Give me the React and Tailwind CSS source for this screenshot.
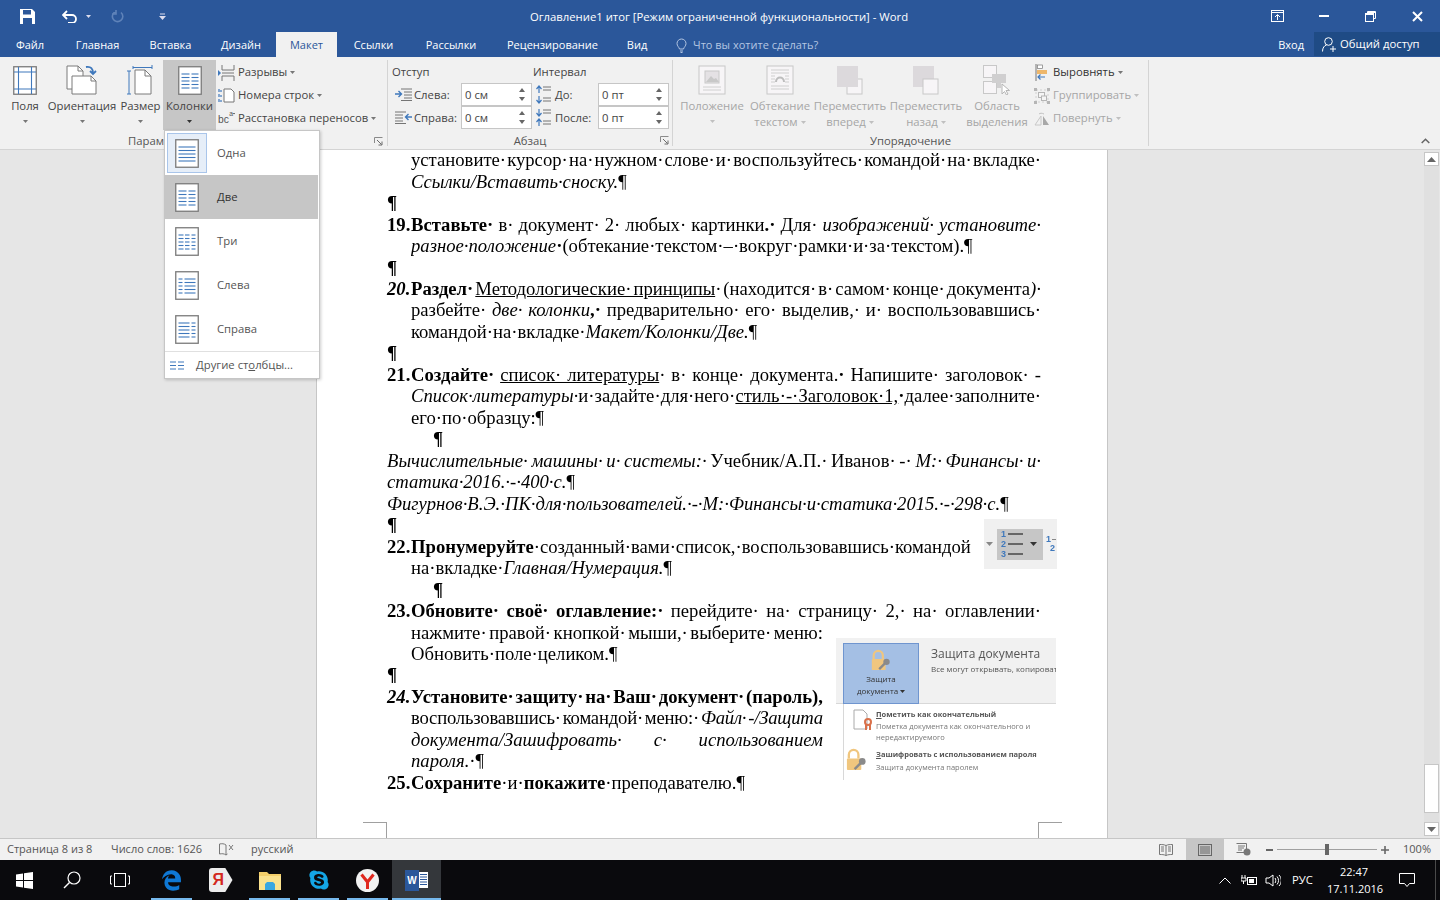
import { FaEdgeLegacy, FaSkype } from 'react-icons/fa6';

const BLUE = '#3f78bc';

function Caret({ className = '', color = '#6a6a6a' }) {
  return (
    <svg width="5" height="3" viewBox="0 0 5 3" className={className}>
      <path d="M0 0h5L2.5 3z" fill={color} />
    </svg>
  );
}

function ColIcon({ cols = [[3, 20]], lines = [8, 11.5, 15, 18.5, 22] }) {
  return (
    <svg width="24" height="29" viewBox="0 0 24 29" className="shrink-0">
      <rect x="0.75" y="0.75" width="22.5" height="27.5" fill="#fff" stroke="#7b7b7b" strokeWidth="1.3" />
      {cols.map(([a, b]) =>
        lines.map((y) => <line key={`${a}-${y}`} x1={a + 0.5} x2={b + 0.5} y1={y} y2={y} stroke={BLUE} strokeWidth="1.1" />)
      )}
    </svg>
  );
}

const TWO = [[3, 11], [13, 20]];
const THREE = [[3, 8], [9.5, 14], [16, 20]];
const LEFT = [[3, 7], [9, 20]];
const RIGHT = [[3, 14], [16, 20]];

function MarginsIcon() {
  return (
    <svg width="24" height="29" viewBox="0 0 24 29">
      <rect x="0.75" y="0.75" width="22.5" height="27.5" fill="#fff" stroke="#7b7b7b" strokeWidth="1.3" />
      <path d="M5.5 1v27M18.5 1v27M1 6h22M1 23h22" stroke={BLUE} strokeWidth="1.1" fill="none" />
    </svg>
  );
}

function OrientationIcon() {
  return (
    <svg width="32" height="30" viewBox="0 0 32 30">
      <path d="M1 1h11l5 5v18H1z" fill="#fff" stroke="#7b7b7b" />
      <path d="M12 1v5h5" fill="none" stroke="#7b7b7b" />
      <path d="M6 11h19l5 5v13H6z" fill="#fff" stroke="#7b7b7b" />
      <path d="M25 11v5h5" fill="none" stroke="#7b7b7b" />
      <path d="M20 2c5-1 7 2 7 6M24 6l3 3 3-3" fill="none" stroke={BLUE} strokeWidth="1.8" />
    </svg>
  );
}

function SizeIcon() {
  return (
    <svg width="27" height="30" viewBox="0 0 27 30">
      <path d="M6 1v3M25 0v4M6 2.5h19" stroke={BLUE} strokeWidth="1" fill="none" />
      <path d="M8 5h10l6 6v18H8z" fill="#fff" stroke="#7b7b7b" />
      <path d="M18 5v6h6" fill="none" stroke="#7b7b7b" />
      <path d="M0 6h4M0 29h4M2 6v23" stroke={BLUE} strokeWidth="1" fill="none" />
    </svg>
  );
}

function BigButton({ w, label, second, caret = true, active, disabled, icon }) {
  return (
    <div
      className={`flex flex-col items-center shrink-0 h-[70px] pt-[5px] ${w} ${active ? 'bg-[#c6c6c6]' : ''}`}
    >
      <div className="h-[30px] flex items-center justify-center">{icon}</div>
      <div className={`mt-[3px] text-[11.3px] leading-[16px] whitespace-nowrap ${disabled ? 'text-[#a6a6a6]' : 'text-[#444444]'}`}>
        {label}
      </div>
      {second ? (
        <div className={`flex items-center gap-[3px] text-[11.3px] leading-[16px] whitespace-nowrap ${disabled ? 'text-[#a6a6a6]' : 'text-[#444444]'}`}>
          {second}
          {caret && <Caret color="#c0c0c0" />}
        </div>
      ) : (
        caret && <Caret className="mt-[6px]" color={active ? '#333' : disabled ? '#c0c0c0' : '#777'} />
      )}
    </div>
  );
}

function SmallRow({ icon, label, disabled, dark }) {
  return (
    <div className="flex items-center h-[23px] whitespace-nowrap">
      <div className="w-[17px] flex justify-center shrink-0">{icon}</div>
      <span className={`ml-[3px] text-[11.3px] ${disabled ? 'text-[#a6a6a6]' : dark ? 'text-[#333]' : 'text-[#444444]'}`}>{label}</span>
      <Caret className="ml-[3px]" color={disabled ? '#c0c0c0' : '#777'} />
    </div>
  );
}

function Launcher() {
  return (
    <svg width="9" height="9" viewBox="0 0 9 9">
      <path d="M0.5 6V0.5H8.5" fill="none" stroke="#8a8a8a" />
      <path d="M3 3l4.5 4.5M8 4.5V8H4.5" fill="none" stroke="#6a6a6a" />
    </svg>
  );
}

function Spin({ value }) {
  return (
    <div className="flex items-center justify-between w-[71px] h-[23px] bg-white border border-[#c6c6c6] pl-[3px] pr-[6px] text-[11.3px] text-[#444444] shrink-0">
      <span className="pt-[1px]">{value}</span>
      <div className="flex flex-col gap-[5px]">
        <svg width="6" height="4" viewBox="0 0 6 4"><path d="M0 4h6L3 0z" fill="#666" /></svg>
        <svg width="6" height="4" viewBox="0 0 6 4"><path d="M0 0h6L3 4z" fill="#666" /></svg>
      </div>
    </div>
  );
}

function IndentIcon({ flip }) {
  return (
    <svg width="17" height="13" viewBox="0 0 17 13">
      <path d={flip ? 'M0 1h11M0 4h8M0 7h8M0 10h8M0 12.5h11' : 'M6 1h11M9 4h8M9 7h8M9 10h8M6 12.5h11'} stroke="#666" strokeWidth="0.9" fill="none" />
      <path d={flip ? 'M17 6H11M13.5 3l-3 3 3 3' : 'M0 6h6M3.5 3l3 3-3 3'} stroke={BLUE} strokeWidth="1.4" fill="none" />
    </svg>
  );
}

function SpaceIcon({ after }) {
  return (
    <svg width="16" height="19" viewBox="0 0 16 19">
      <path d="M8 2h8M8 5h8M8 13h8M8 16h8" stroke="#666" strokeWidth="0.9" fill="none" />
      {after ? (
        <path d="M4 1v6M1.5 5L4 8l2.5-3M4 18v-6M1.5 14L4 11l2.5 3" stroke={BLUE} strokeWidth="1.2" fill="none" />
      ) : (
        <path d="M4 8V2M1.5 4L4 1l2.5 3M4 11v6M1.5 15L4 18l2.5-3" stroke={BLUE} strokeWidth="1.2" fill="none" />
      )}
    </svg>
  );
}

function FadedPage({ children }) {
  return (
    <svg width="28" height="30" viewBox="0 0 28 30">
      <rect x="1" y="1" width="26" height="28" fill="#f7f5f7" stroke="#c8c8c8" />
      {children}
    </svg>
  );
}

function FrontBack({ back }) {
  return (
    <svg width="26" height="29" viewBox="0 0 26 29">
      {back ? (
        <>
          <rect x="0" y="0" width="21" height="21" fill="#dcd9dc" />
          <rect x="10" y="13" width="15" height="15" fill="#f7f5f7" stroke="#c8c8c8" />
        </>
      ) : (
        <>
          <rect x="10" y="13" width="15" height="15" fill="#f7f5f7" stroke="#c8c8c8" />
          <rect x="0" y="0" width="21" height="21" fill="#dcd9dc" />
        </>
      )}
    </svg>
  );
}

function Ribbon() {
  return (
    <div className="flex h-[93px] pt-[3px] bg-[#f1f1f1] border-b border-[#d4d4d4]">
      {/* Параметры страницы */}
      <div className="w-[388px] h-[86px] shrink-0 border-r border-[#d4d4d4]">
        <div className="flex h-[70px] pl-[4px]">
          <BigButton w="w-[42px]" label="Поля" icon={<MarginsIcon />} />
          <BigButton w="w-[72px]" label="Ориентация" icon={<OrientationIcon />} />
          <BigButton w="w-[45px]" label="Размер" icon={<SizeIcon />} />
          <BigButton w="w-[53px]" label="Колонки" active icon={<ColIcon cols={TWO} />} />
          <div className="pl-[2px] pt-[1px]">
            <SmallRow
              label="Разрывы"
              icon={
                <svg width="17" height="16" viewBox="0 0 17 16">
                  <path d="M4 0v5h12V0M4 16v-5h12v5M4 8h12" fill="none" stroke="#777" />
                  <path d="M0 5l3 3-3 3z" fill={BLUE} />
                </svg>
              }
            />
            <SmallRow
              label="Номера строк"
              icon={
                <svg width="17" height="15" viewBox="0 0 17 15">
                  <path d="M6 1h7l3 3v10H6z" fill="#fff" stroke="#777" />
                  <path d="M1 1v3M1 6v3M1 11v3M3 2v2M3 7v2M3 12v2" stroke={BLUE} strokeWidth="1.2" />
                </svg>
              }
            />
            <SmallRow
              label="Расстановка переносов"
              icon={
                <svg width="19" height="17" viewBox="0 0 19 17">
                  <text x="0" y="14" fontSize="11.5" fill="#555" fontFamily="'Liberation Sans', sans-serif">bc</text>
                  <text x="12.5" y="6" fontSize="7.5" fill="#555" fontFamily="'Liberation Sans', sans-serif">a</text>
                  <path d="M16.5 3h2.5" stroke="#555" />
                </svg>
              }
            />
          </div>
        </div>
        <div className="flex items-center justify-between pl-[128px] pr-[4px] mt-[3px] h-[16px] text-[11.3px] leading-[16px] text-[#555555]">
          <span>Параметры страницы</span>
          <Launcher />
        </div>
      </div>

      {/* Абзац */}
      <div className="w-[285px] h-[86px] shrink-0 border-r border-[#d4d4d4]">
        <div className="flex h-[70px]">
          <div className="w-[145px] shrink-0 pl-[4px]">
            <div className="h-[23px] leading-[23px] text-[11.3px] text-[#444444]">Отступ</div>
            <div className="flex items-center h-[23px]">
              <div className="ml-[3px] w-[17px] shrink-0"><IndentIcon /></div>
              <span className="w-[47px] ml-[2px] pt-[1px] text-[11.3px] text-[#444444]">Слева:</span>
              <Spin value="0 см" />
            </div>
            <div className="flex items-center h-[23px]">
              <div className="ml-[3px] w-[17px] shrink-0"><IndentIcon flip /></div>
              <span className="w-[47px] ml-[2px] pt-[1px] text-[11.3px] text-[#444444] whitespace-nowrap">Справа:</span>
              <Spin value="0 см" />
            </div>
          </div>
          <div className="shrink-0 pl-[2px]">
            <div className="h-[23px] leading-[23px] text-[11.3px] text-[#444444] -ml-[2px]">Интервал</div>
            <div className="flex items-center h-[23px]">
              <div className="w-[17px] shrink-0"><SpaceIcon /></div>
              <span className="w-[43px] ml-[3px] pt-[1px] text-[11.3px] text-[#444444]">До:</span>
              <Spin value="0 пт" />
            </div>
            <div className="flex items-center h-[23px]">
              <div className="w-[17px] shrink-0"><SpaceIcon after /></div>
              <span className="w-[43px] ml-[3px] pt-[1px] text-[11.3px] text-[#444444]">После:</span>
              <Spin value="0 пт" />
            </div>
          </div>
        </div>
        <div className="relative mt-[3px] h-[16px] text-center text-[11.3px] leading-[16px] text-[#555555]">
          <span>Абзац</span>
          <div className="absolute right-[3px] top-[3px]"><Launcher /></div>
        </div>
      </div>

      {/* Упорядочение */}
      <div className="w-[476px] h-[86px] shrink-0 border-r border-[#d4d4d4]">
        <div className="flex h-[70px] pl-[4px]">
          <BigButton
            w="w-[70px]"
            label="Положение"
            disabled
            icon={
              <FadedPage>
                <rect x="7" y="6" width="14" height="12" fill="#e4e1e4" stroke="#c8c8c8" />
                <path d="M8 17l5-6 3 3 2-1 3 4z" fill="#c8c8c8" />
                <path d="M5 22h18M5 25h18" stroke="#d0d0d0" />
              </FadedPage>
            }
          />
          <BigButton
            w="w-[66px]"
            label="Обтекание"
            second="текстом"
            disabled
            icon={
              <FadedPage>
                <path d="M5 5h18M5 8h18M5 11h4M19 11h4M5 14h4M19 14h4M5 17h4M19 17h4M5 21h18M5 24h18" stroke="#cfcfcf" />
                <path d="M10 17c0-6 8-6 8 0" fill="none" stroke="#bdbdbd" strokeWidth="2" />
              </FadedPage>
            }
          />
          <BigButton w="w-[74px]" label="Переместить" second="вперед" disabled icon={<FrontBack />} />
          <BigButton w="w-[78px]" label="Переместить" second="назад" disabled icon={<FrontBack back />} />
          <BigButton
            w="w-[64px]"
            label="Область"
            second="выделения"
            caret={false}
            disabled
            icon={
              <svg width="29" height="30" viewBox="0 0 29 30">
                <rect x="0.5" y="0.5" width="13" height="12" fill="#f7f5f7" stroke="#c8c8c8" />
                <rect x="0.5" y="16.5" width="13" height="12" fill="#f7f5f7" stroke="#c8c8c8" />
                <rect x="9" y="9" width="14" height="9" fill="#d0cfd0" />
                <rect x="14" y="14" width="4" height="9" fill="#d0cfd0" />
                <path d="M19 19v10l2.5-2.5 2 3.5 1.5-1-2-3.5h3.5z" fill="#fff" stroke="#b5b5b5" />
              </svg>
            }
          />
          <div className="pl-[4px] pt-[1px]">
            <SmallRow
              label="Выровнять"
              dark
              icon={
                <svg width="14" height="17" viewBox="0 0 14 17">
                  <path d="M1 0v17" stroke="#777" />
                  <rect x="2.5" y="1" width="5" height="3.5" fill="#fff" stroke="#777" strokeWidth="0.7" />
                  <rect x="2" y="6" width="10" height="4" fill="#eeb76b" />
                  <path d="M10 13H3M5.5 10.5L3 13l2.5 2.5" stroke={BLUE} strokeWidth="1.2" fill="none" />
                </svg>
              }
            />
            <SmallRow
              label="Группировать"
              disabled
              icon={
                <svg width="16" height="16" viewBox="0 0 16 16">
                  <path d="M2 2h12v12H2z" fill="none" stroke="#d0d0d0" strokeDasharray="2 2" />
                  <rect x="4.5" y="4.5" width="6" height="5" fill="#f5f5f5" stroke="#b5b5b5" />
                  <rect x="7.5" y="8" width="5" height="4.5" fill="#f5f5f5" stroke="#b5b5b5" />
                  <path d="M0 0h3v3H0zM13 0h3v3h-3zM0 13h3v3H0zM13 13h3v3h-3z" fill="#b5b5b5" />
                </svg>
              }
            />
            <SmallRow
              label="Повернуть"
              disabled
              icon={
                <svg width="15" height="14" viewBox="0 0 15 14">
                  <path d="M7 13H1l6-9z" fill="none" stroke="#c8c8c8" />
                  <path d="M9 13h6l-6-9z" fill="#a8a8a8" />
                  <path d="M5 2c1-1 3-1 5 0" fill="none" stroke="#c0c0c0" />
                </svg>
              }
            />
          </div>
        </div>
        <div className="mt-[3px] h-[16px] text-center text-[11.3px] leading-[16px] text-[#555555]">Упорядочение</div>
      </div>

      <div className="flex-1 flex justify-end items-end pr-[10px] pb-[5px]">
        <svg width="9" height="6" viewBox="0 0 9 6"><path d="M0.7 5L4.5 1.2 8.3 5" fill="none" stroke="#666" strokeWidth="1.5" /></svg>
      </div>
    </div>
  );
}

function ColumnsMenu() {
  const Item = ({ label, cols, hl, sel }) => (
    <div className={`flex items-center h-[44px] ${hl ? 'bg-[#c6c6c6]' : ''}`}>
      <div className={`w-[40px] h-[40px] ml-[2px] flex items-center justify-center border ${sel ? 'bg-[#e6eef8] border-[#a9c5ea]' : 'border-transparent'}`}>
        <ColIcon cols={cols} />
      </div>
      <span className={`ml-[10px] text-[11.3px] ${hl ? 'text-[#333]' : 'text-[#555555]'}`}>{label}</span>
    </div>
  );
  return (
    <div className="absolute left-[164px] top-[130px] w-[156px] h-[249px] bg-white border border-[#c6c6c6] shadow-[1px_1px_3px_rgba(0,0,0,0.2)] z-10">
      <div className="mr-[1px]">
        <Item label="Одна" cols={[[3, 20]]} sel />
        <Item label="Две" cols={TWO} hl />
        <Item label="Три" cols={THREE} />
        <Item label="Слева" cols={LEFT} />
        <Item label="Справа" cols={RIGHT} />
      </div>
      <div className="h-[27px] border-t border-[#e0e0e0] flex items-center pl-[5px]">
        <svg width="14" height="9" viewBox="0 0 14 9"><path d="M0 1h6M0 4.5h6M0 8h6M8 1h6M8 4.5h6M8 8h6" stroke={BLUE} strokeWidth="1" /></svg>
        <span className="ml-[12px] text-[11.3px] text-[#555555]">Другие ст<u>о</u>лбцы...</span>
      </div>
    </div>
  );
}

// one line of the document, hanging number and justified text are optional
function Line({ num, numItalic, j, narrow, indent, wide, children }) {
  return (
    <div className={`flex h-[21.47px] leading-[21.47px] whitespace-nowrap ${indent ? 'pl-[24px]' : ''} ${wide ? 'pl-[46px]' : ''} ${narrow ? 'pr-[218px]' : ''}`}>
      {num && <span className={`w-[24px] shrink-0 font-bold ${numItalic ? 'italic' : ''}`}>{num}</span>}
      <div className={`flex-1 min-w-0 overflow-hidden ${j ? 'text-justify [text-align-last:justify] [word-spacing:-4.67px]' : ''}`}>
        {children}
      </div>
    </div>
  );
}

function PageText() {
  const P = <b>¶</b>;
  return (
    <div className="-mt-[0.8px] [will-change:opacity] font-['Liberation_Serif',serif] text-[18.67px] text-black">
      <Line indent j>установите· курсор· на· нужном· слове· и· воспользуйтесь· командой· на· вкладке·</Line>
      <Line indent><i>Ссылки/Вставить·сноску.</i>¶</Line>
      <Line>{P}</Line>
      <Line num="19." j><b>Вставьте·</b> в· документ· 2· любых· картинки<b>.·</b> Для· <i>изображений· установите·</i></Line>
      <Line indent><i>разное·положение</i><b>·</b>(обтекание·текстом·–·вокруг·рамки·и·за·текстом).¶</Line>
      <Line>{P}</Line>
      <Line num="20." numItalic j><b>Раздел·</b> <u>Методологические· принципы</u>· (находится· в· самом· конце· документа<i>)·</i></Line>
      <Line indent j>разбейте· <i>две· колонки</i><b>,·</b> предварительно· его· выделив,· и· воспользовавшись·</Line>
      <Line indent>командой·на·вкладке·<i>Макет/Колонки/Две.</i>¶</Line>
      <Line>{P}</Line>
      <Line num="21." j><b>Создайте·</b> <u>список· литературы</u>· в· конце· документа.<b>·</b> Напишите· заголовок· -</Line>
      <Line indent j><i>Список· литературы·</i> и· задайте· для· него· <u>стиль· -· Заголовок· 1,</u><b>·</b> далее· заполните·</Line>
      <Line indent>его·по·образцу:¶</Line>
      <Line wide>{P}</Line>
      <Line j><i>Вычислительные· машины· и· системы:·</i> Учебник/А.П.· Иванов· -· <i>М:· Финансы· и·</i></Line>
      <Line><i>статика·2016.·-·400·с.</i>¶</Line>
      <Line><i>Фигурнов·В.Э.·ПК·для·пользователей.·-·М:·Финансы·и·статика·2015.·-·298·с.</i>¶</Line>
      <Line>{P}</Line>
      <Line num="22."><b>Пронумеруйте</b>·созданный·вами·список,·воспользовавшись·командой</Line>
      <Line indent>на·вкладке·<i>Главная/Нумерация.</i>¶</Line>
      <Line wide>{P}</Line>
      <Line num="23." j><b>Обновите· своё· оглавление:·</b> перейдите· на· страницу· 2,· на· оглавлении·</Line>
      <Line indent j narrow>нажмите· правой· кнопкой· мыши,· выберите· меню:</Line>
      <Line indent>Обновить·поле·целиком.¶</Line>
      <Line>{P}</Line>
      <Line num="24." numItalic j narrow><b>Установите· защиту· на· Ваш· документ· (пароль),</b></Line>
      <Line indent j narrow><span className="tracking-[-0.2px]">воспользовавшись· командой· меню:· <i>Файл· -/Защита</i></span></Line>
      <Line indent j narrow><i>документа/Зашифровать· с· использованием</i></Line>
      <Line indent><i>пароля.</i>·¶</Line>
      <Line num="25."><b>Сохраните</b>·и·<b>покажите</b>·преподавателю.¶</Line>
    </div>
  );
}

function NumberingPicture() {
  return (
    <div className="absolute left-[667px] top-[369px] w-[73px] h-[50px] bg-[#f0f0f0] flex items-center blur-[0.3px] overflow-hidden font-['Liberation_Sans',sans-serif]">
      <svg width="7" height="4" viewBox="0 0 7 4" className="ml-[2px] shrink-0"><path d="M0 0h7L3.5 4z" fill="#888" /></svg>
      <div className="ml-[4px] w-[46px] h-[31px] shrink-0 bg-[#c6c6c6] flex items-center">
        <div className="ml-[4px] w-[24px] text-[9px] leading-[10px] font-bold text-[#3f78bc]">
          <div className="flex items-center gap-[2px]">1<span className="w-[15px] h-[2px] bg-[#666]" /></div>
          <div className="flex items-center gap-[2px]">2<span className="w-[15px] h-[2px] bg-[#666]" /></div>
          <div className="flex items-center gap-[2px]">3<span className="w-[15px] h-[2px] bg-[#666]" /></div>
        </div>
        <svg width="7" height="4" viewBox="0 0 7 4" className="ml-[5px]"><path d="M0 0h7L3.5 4z" fill="#333" /></svg>
      </div>
      <div className="ml-[3px] text-[9px] leading-[9px] font-bold text-[#3f78bc]">
        <div className="flex items-center gap-[1px]">1<span className="w-[4px] h-[1px] bg-[#888]" /></div>
        <div className="pl-[4px]">2</div>
      </div>
    </div>
  );
}

function LockIcon({ size = 24 }) {
  return (
    <svg width={size} height={size} viewBox="0 0 24 24">
      <path d="M4 11V7a5 5 0 0 1 10 0v4" fill="none" stroke="#f0c67e" strokeWidth="2.4" />
      <rect x="2" y="11" width="15" height="12" rx="1" fill="#f0c67e" />
      <circle cx="18" cy="14" r="3.5" fill="#8a8a8a" />
      <path d="M16 16l-6 6" stroke="#8a8a8a" strokeWidth="2.5" />
    </svg>
  );
}

function ProtectPicture() {
  return (
    <div className="absolute left-[519px] top-[488px] w-[220px] h-[142px] bg-white overflow-hidden blur-[0.3px] font-['Open_Sans',sans-serif]">
      <div className="flex h-[66px] bg-[#f1f1f1] border-b border-[#d8d8d8] pl-[7px] pt-[5px]">
        <div className="w-[76px] h-[61px] shrink-0 bg-[#a4bfe4] border border-[#6f95cf] flex flex-col items-center pt-[5px] text-[8px] leading-[12px] text-[#333]">
          <LockIcon size={22} />
          <span className="mt-[2px]">Защита</span>
          <span className="flex items-center gap-[2px]">документа<Caret color="#333" /></span>
        </div>
        <div className="ml-[12px] whitespace-nowrap pt-[2px]">
          <div className="text-[12px] leading-[18px] text-[#555555]">Защита документа</div>
          <div className="text-[8px] leading-[12px] text-[#555555]">Все могут открывать, копировать</div>
        </div>
      </div>
      <div className="ml-[7px] h-[76px] border-l border-[#d8d8d8]">
        <div className="flex pl-[9px] pt-[5px] h-[44px]">
          <svg width="20" height="22" viewBox="0 0 20 22" className="shrink-0">
            <path d="M1 1h9l4 4v15H1z" fill="#fff" stroke="#aaa" />
            <circle cx="15" cy="13" r="3" fill="none" stroke="#d9714b" strokeWidth="2" />
            <path d="M13 16v5M17 16v5" stroke="#d9714b" strokeWidth="2" />
          </svg>
          <div className="ml-[3px] whitespace-nowrap text-[7.5px] leading-[11.5px] text-[#777]">
            <div className="font-bold text-[#555]"><u>П</u>ометить как окончательный</div>
            <div>Пометка документа как окончательного и</div>
            <div>нередактируемого</div>
          </div>
        </div>
        <div className="flex pl-[1px]">
          <LockIcon size={23} />
          <div className="ml-[8px] whitespace-nowrap text-[7.5px] leading-[12.5px] text-[#777]">
            <div className="font-bold text-[#555]"><u>З</u>ашифровать с использованием пароля</div>
            <div>Защита документа паролем</div>
          </div>
        </div>
      </div>
    </div>
  );
}

function Scrollbar() {
  const Btn = ({ up }) => (
    <div className="w-[15px] h-[14px] bg-white border border-[#c6c6c6] flex items-center justify-center shrink-0">
      <svg width="9" height="5" viewBox="0 0 9 5"><path d={up ? 'M0 5h9L4.5 0z' : 'M0 0h9L4.5 5z'} fill="#666" /></svg>
    </div>
  );
  return (
    <div className="w-[16px] shrink-0 flex flex-col pt-[2px] pb-[2px] bg-[#e6e6e6]">
      <Btn up />
      <div className="flex-1 bg-[#e0e0e0] w-[15px] flex flex-col justify-end pb-[9px]">
        <div className="h-[49px] w-[15px] bg-white border border-[#c6c6c6]" />
      </div>
      <Btn />
    </div>
  );
}

function Taskbar() {
  const Cell = ({ children, mark, active }) => (
    <div className={`relative w-[49px] h-[40px] flex items-center justify-center shrink-0 ${active ? 'bg-[#34373b]' : ''}`}>
      {children}
      {mark && <div className={`absolute bottom-0 h-[2px] bg-[#76b9ed] ${active ? 'inset-x-0' : 'inset-x-[4px]'}`} />}
    </div>
  );
  return (
    <div className="h-[40px] bg-[#0a0a0d] flex items-center text-white shrink-0">
      <div className="w-[48px] flex justify-center">
        <svg width="17" height="17" viewBox="0 0 17 17"><path d="M0 2.5L7 1.5V8H0zM8 1.3L17 0v8H8zM0 9h7v6.5L0 14.5zM8 9h9v8L8 15.7z" fill="#fff" /></svg>
      </div>
      <div className="w-[48px] flex justify-center">
        <svg width="18" height="18" viewBox="0 0 18 18"><circle cx="11" cy="7" r="6" fill="none" stroke="#fff" strokeWidth="1.2" /><path d="M6.5 11.5L1 17" stroke="#fff" strokeWidth="1.4" /></svg>
      </div>
      <div className="w-[48px] flex justify-center">
        <svg width="20" height="14" viewBox="0 0 20 14"><rect x="4.5" y="0.5" width="11" height="13" fill="none" stroke="#fff" /><path d="M2 3H0.5v8H2M18 3h1.5v8H18" fill="none" stroke="#fff" /></svg>
      </div>
      <div className="w-[3px]" />
      <Cell mark><FaEdgeLegacy size={21} color="#0f78d4" /></Cell>
      <Cell>
        <div className="relative w-[24px] h-[24px] bg-[#ececec] rounded-l-[3px] [clip-path:polygon(0_0,70%_0,100%_50%,70%_100%,0_100%)] flex items-center pl-[4px] text-[16px] font-bold text-[#d3271c] font-['Liberation_Sans',sans-serif]">Я</div>
      </Cell>
      <Cell mark>
        <svg width="22" height="19" viewBox="0 0 22 19">
          <path d="M0 1h8l2 2h12v16H0z" fill="#f4cf6a" />
          <path d="M0 5h22v14H0z" fill="#fbe28d" />
          <path d="M6 19v-6l2-2h6l2 2v6z" fill="#3aa7e0" />
        </svg>
      </Cell>
      <Cell mark><FaSkype size={22} color="#14a6e6" /></Cell>
      <Cell mark>
        <svg width="23" height="23" viewBox="0 0 23 23">
          <circle cx="11.5" cy="11.5" r="11.5" fill="#f2f2f2" />
          <path d="M5.5 5.5l6 7.5 6-7.5M11.5 13v7" fill="none" stroke="#e0281e" strokeWidth="3" />
        </svg>
      </Cell>
      <Cell mark active>
        <div className="flex items-center">
          <div className="w-[14px] h-[21px] bg-[#2b579a] -mr-[2px] z-10 flex items-center justify-center text-[10px] font-bold text-white font-['Liberation_Sans',sans-serif]">W</div>
          <svg width="11" height="16" viewBox="0 0 11 16">
            <rect width="11" height="16" fill="#fff" />
            <path d="M3 2.5h7M3 5h7M3 7.5h7M3 10h7M3 12.5h7" stroke="#2b579a" />
          </svg>
        </div>
      </Cell>
      <div className="flex-1" />
      <svg width="12" height="7" viewBox="0 0 12 7"><path d="M0.5 6.5L6 1l5.5 5.5" fill="none" stroke="#fff" /></svg>
      <svg width="16" height="11" viewBox="0 0 16 11" className="ml-[10px]">
        <path d="M1 0v3M4 0v3M0 3h5v3H0zM2.5 6v3" stroke="#fff" fill="none" />
        <rect x="6.5" y="2.5" width="9" height="7" fill="none" stroke="#fff" />
        <rect x="8" y="4" width="5" height="4" fill="#fff" />
      </svg>
      <svg width="16" height="13" viewBox="0 0 16 13" className="ml-[8px]">
        <path d="M1 4h3l4-3v11L4 9H1zM10 4c1 1 1 4 0 5M12 2.5c2 2 2 6 0 8M14 1c3 3 3 8 0 11" fill="none" stroke="#fff" />
      </svg>
      <span className="ml-[11px] text-[11.3px] w-[24px]">РУС</span>
      <div className="ml-[11px] w-[54px] text-center text-[11px] leading-[17px] whitespace-nowrap -mt-[1px]">
        <div>22:47</div>
        <div>17.11.2016</div>
      </div>
      <svg width="16" height="15" viewBox="0 0 16 15" className="ml-[18px]">
        <path d="M0.5 0.5h15v10h-5l-2.5 3-2.5-3h-5z" fill="none" stroke="#fff" />
      </svg>
      <div className="ml-[20px] w-[5px] h-full border-l border-[#4a4a4a]" />
    </div>
  );
}

export default function App() {
  return (
    <div className="relative w-[1440px] h-[900px] flex flex-col overflow-hidden font-['Open_Sans',sans-serif] bg-[#e6e6e6]">
      {/* title bar */}
      <div className="h-[32px] bg-[#2b579a] flex items-center text-white shrink-0">
        <svg width="15" height="15" viewBox="0 0 15 15" className="ml-[20px]">
          <path d="M0 0h12l3 3v12H0z" fill="#fff" />
          <rect x="3" y="1" width="8" height="4.5" fill="#2b579a" />
          <rect x="3" y="9" width="9" height="6" fill="#2b579a" />
        </svg>
        <svg width="16" height="13" viewBox="0 0 16 13" className="ml-[27px]">
          <path d="M1 5h9a4 4 0 0 1 0 8H6M5 1L1 5l4 4" fill="none" stroke="#fff" strokeWidth="1.8" />
        </svg>
        <Caret className="ml-[8px]" color="#dde" />
        <svg width="13" height="13" viewBox="0 0 13 13" className="ml-[20px]">
          <path d="M10 2.5A5.2 5.2 0 1 1 5 1.5M5 0v4H1" fill="none" stroke="#5f83b9" strokeWidth="1.6" />
        </svg>
        <svg width="7" height="7" viewBox="0 0 7 7" className="ml-[35px]">
          <path d="M1 1h5" stroke="#dde" />
          <path d="M0 3h7L3.5 7z" fill="#dde" />
        </svg>
        <div className="flex-1 text-center text-[11.3px] pt-[2px] pl-[18px] whitespace-nowrap">Оглавление1 итог [Режим ограниченной функциональности] - Word</div>
        <div className="w-[46px] flex justify-center">
          <svg width="13" height="12" viewBox="0 0 13 12"><rect x="0.5" y="0.5" width="12" height="11" fill="none" stroke="#fff" /><path d="M1 2.5h11" stroke="#fff" /><path d="M6.5 10V5M4 7l2.5-2.5L9 7" fill="none" stroke="#fff" /></svg>
        </div>
        <div className="w-[47px] flex justify-center">
          <svg width="10" height="2" viewBox="0 0 10 2"><rect width="10" height="2" fill="#fff" /></svg>
        </div>
        <div className="w-[47px] flex justify-center">
          <svg width="11" height="11" viewBox="0 0 11 11"><path d="M2.5 2.5V0.5h8v7h-2" fill="none" stroke="#fff" /><rect x="0.5" y="2.5" width="8" height="8" fill="none" stroke="#fff" /><path d="M0.5 3.5h8M2.5 1.5h8" stroke="#fff" /></svg>
        </div>
        <div className="w-[46px] flex justify-center">
          <svg width="11" height="11" viewBox="0 0 11 11"><path d="M1 1l9 9M10 1l-9 9" stroke="#fff" strokeWidth="2" /></svg>
        </div>
      </div>

      {/* tabs */}
      <div className="h-[25px] bg-[#2b579a] flex items-stretch text-[11px] text-white shrink-0 whitespace-nowrap">
        <div className="w-[60px] pt-[2px] flex items-center justify-center">Файл</div>
        <div className="w-[75px] pt-[2px] flex items-center justify-center">Главная</div>
        <div className="w-[71px] pt-[2px] flex items-center justify-center">Вставка</div>
        <div className="w-[70px] pt-[2px] flex items-center justify-center">Дизайн</div>
        <div className="w-[61px] pt-[2px] flex items-center justify-center bg-[#f1f1f1] text-[#2b579a]">Макет</div>
        <div className="w-[73px] pt-[2px] flex items-center justify-center">Ссылки</div>
        <div className="w-[82px] pt-[2px] flex items-center justify-center">Рассылки</div>
        <div className="w-[121px] pt-[2px] flex items-center justify-center">Рецензирование</div>
        <div className="w-[48px] pt-[2px] flex items-center justify-center">Вид</div>
        <div className="ml-[15px] pt-[2px] flex items-center text-[#b4c6e2]">
          <svg width="11" height="15" viewBox="0 0 11 15">
            <path d="M3.5 11C3 9 1 8 1 5.5a4.5 4.5 0 0 1 9 0C10 8 8 9 7.5 11zM4 13h3M4.5 14.5h2" fill="none" stroke="#b4c6e2" />
          </svg>
          <span className="ml-[6px]">Что вы хотите сделать?</span>
        </div>
        <div className="flex-1" />
        <div className="flex items-center pt-[2px] mr-[10px]">Вход</div>
        <div className="w-[126px] h-[24px] bg-[#1f4b85] flex items-center pl-[8px] pt-[1px] text-[11.3px]">
          <svg width="15" height="15" viewBox="0 0 15 15">
            <circle cx="6.5" cy="4.5" r="3.8" fill="none" stroke="#fff" />
            <path d="M0.5 14.5c0-4 2-6 4-6.5M11 9v6M8 12h6" fill="none" stroke="#fff" />
          </svg>
          <span className="ml-[3px]">Общий доступ</span>
        </div>
      </div>

      <Ribbon />
      <ColumnsMenu />

      {/* document */}
      <div className="flex-1 min-h-0 flex">
        <div className="w-[316px] shrink-0" />
        <div className="relative w-[792px] shrink-0 bg-white border-x border-[#c6c6c6] pl-[70px] pr-[66px] overflow-hidden">
          <PageText />
          <NumberingPicture />
          <ProtectPicture />
          <div className="absolute left-[46px] top-[672px] w-[24px] h-[16px] border-t border-r border-[#a0a0a0]" />
          <div className="absolute left-[721px] top-[672px] w-[24px] h-[16px] border-t border-l border-[#a0a0a0]" />
        </div>
        <div className="flex-1" />
        <Scrollbar />
      </div>

      {/* status bar */}
      <div className="h-[22px] bg-[#f1f1f1] border-t border-[#c6c6c6] flex items-center text-[11px] text-[#555555] shrink-0 whitespace-nowrap">
        <span className="ml-[7px] w-[104px]">Страница 8 из 8</span>
        <span className="w-[108px]">Число слов: 1626</span>
        <svg width="15" height="13" viewBox="0 0 15 13">
          <path d="M7 2C5 0.5 3 0.5 0.5 1v10c2.5-0.5 4.5-0.5 6.5 1V2zM7 12l1.5-1" fill="none" stroke="#777" />
          <path d="M10 2l4 5M14 2l-4 5" stroke="#777" />
        </svg>
        <span className="ml-[17px]">русский</span>
        <div className="flex-1" />
        <svg width="14" height="12" viewBox="0 0 14 12">
          <path d="M7 1.5C5 0.5 3 0.5 0.5 0.5v10c2.5 0 4.5 0 6.5 1 2-1 4-1 6.5-1v-10c-2.5 0-4.5 0-6.5 1zM7 1.5v10M2 3h3M2 5h3M2 7h3M9 3h3M9 5h3M9 7h3" fill="none" stroke="#777" />
        </svg>
        <div className="ml-[13px] w-[38px] h-full bg-[#c6c6c6] flex items-center justify-center">
          <svg width="14" height="12" viewBox="0 0 14 12">
            <rect x="0.5" y="0.5" width="13" height="11" fill="none" stroke="#666" />
            <path d="M2 3h10M2 5h10M2 7h10M2 9h10" stroke="#666" />
          </svg>
        </div>
        <svg width="15" height="13" viewBox="0 0 15 13" className="ml-[12px]">
          <path d="M0.5 0.5h10v9h-10M2 3h7M2 5h6M2 7h4" fill="none" stroke="#777" />
          <circle cx="11" cy="9" r="3.5" fill="#777" />
        </svg>
        <svg width="7" height="2" viewBox="0 0 7 2" className="ml-[15px]"><rect width="7" height="2" fill="#666" /></svg>
        <div className="relative ml-[4px] w-[100px] h-[1px] bg-[#a0a0a0]">
          <div className="absolute left-[48px] -top-[5px] w-[4px] h-[11px] bg-[#666]" />
        </div>
        <svg width="8" height="8" viewBox="0 0 8 8" className="ml-[4px]"><path d="M4 0v8M0 4h8" stroke="#666" strokeWidth="1.6" /></svg>
        <span className="ml-[14px] mr-[9px]">100%</span>
      </div>

      <Taskbar />
    </div>
  );
}
